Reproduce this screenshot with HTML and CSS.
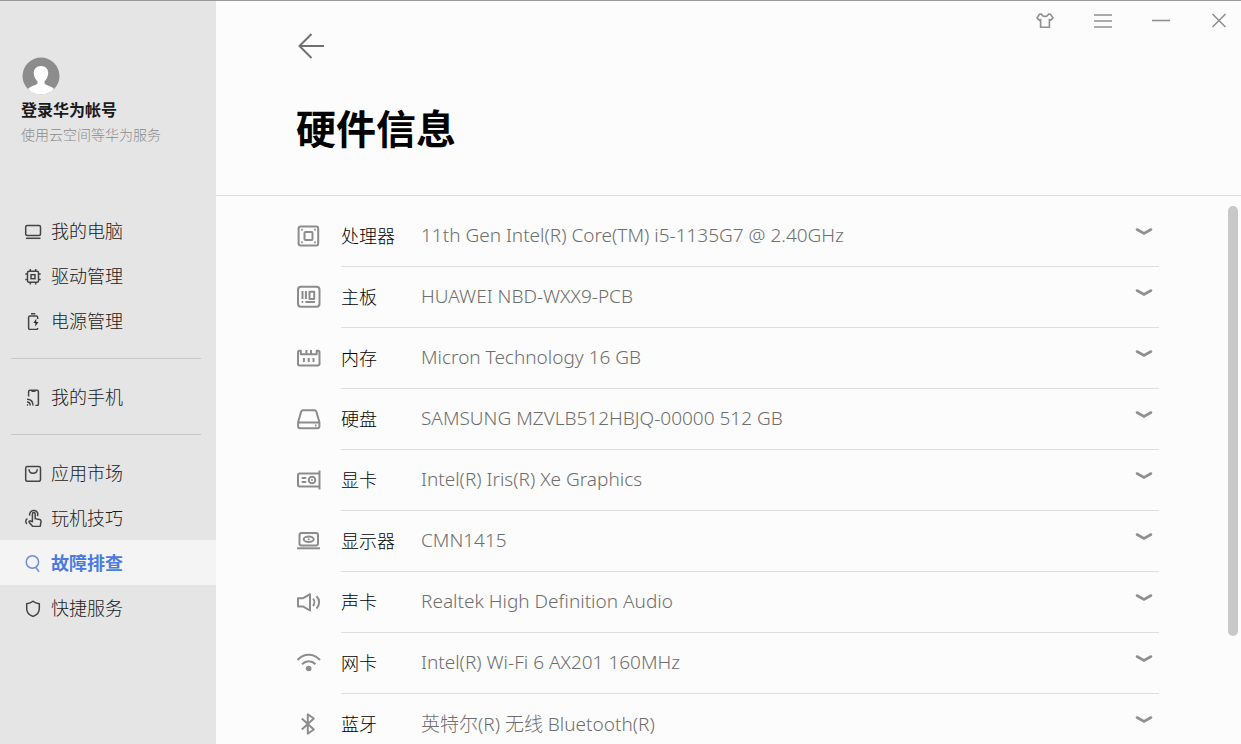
FILE: index.html
```html
<!DOCTYPE html>
<html lang="zh-CN">
<head>
    <meta charset="UTF-8">
    <meta name="viewport" content="width=device-width, initial-scale=1.0">
    <title>硬件信息</title>
    <link rel="stylesheet" href="styles.css">
</head>
<body>
    <div class="app">
        <aside class="sidebar">
            <a href="#" class="account">
                <svg class="avatar" viewBox="0 0 38 38">
                    <circle cx="19" cy="19" r="18.5" fill="#8c8c8c"/>
                    <path d="M19 9c-4.500 0-7.500 3.200-7.200 7.600.2 3.600 2 6.200 3.700 7.800v2.200c-1 1.700-7.500 2.700-9.500 5.400 3.400 3.600 8 5.500 13 5.500s9.600-1.900 13-5.500c-2-2.700-8.500-3.700-9.500-5.400v-2.200c1.700-1.600 3.500-4.200 3.700-7.800C26.500 12.200 23.500 9 19 9z" fill="#fff"/>
                </svg>
                <span class="account-name">登录华为帐号</span>
                <span class="account-text">使用云空间等华为服务</span>
            </a>
            <nav class="menu">
                <a href="#" class="menu-item">
                    <svg viewBox="0 0 19 19"><rect x="1.700" y="4.500" width="14.800" height="10" rx="1.500"/><path d="M2 17.300h14.500"/></svg>
                    我的电脑
                </a>
                <a href="#" class="menu-item">
                    <svg viewBox="0 0 19 19"><rect x="3.500" y="5.200" width="11" height="11" rx="1.500"/><rect x="7" y="8.700" width="4" height="4"/><path d="M6.300 5V3M11.700 5V3M6.300 16.400v2M11.700 16.400v2M3.300 8h-2M3.300 13.400h-2M14.700 8h2M14.700 13.400h2"/></svg>
                    驱动管理
                </a>
                <a href="#" class="menu-item">
                    <svg viewBox="0 0 19 19"><path d="M7 2.800h4.300M13.700 8V6.500c0-1-.6-1.600-1.600-1.600H6.200c-1 0-1.600.6-1.600 1.600v10.400c0 1 .6 1.600 1.600 1.600h5.900c1 0 1.600-.6 1.600-1.600"/><path d="M12.300 7.800l-3 4.300h2v3.400l3.200-4.600h-2.200z" fill="#333" stroke="none"/></svg>
                    电源管理
                </a>
                <hr class="menu-line">
                <a href="#" class="menu-item">
                    <svg viewBox="0 0 19 19"><path d="M4.600 9.500V4.700c0-.9.500-1.400 1.400-1.400h7c.9 0 1.400.5 1.400 1.400v12.400c0 .9-.5 1.400-1.400 1.400h-1.700M7.500 4.200h4M3 12.200c3.700 0 6 2.500 6 6.300M3 15c2 0 3.200 1.400 3.200 3.400"/><circle cx="3.500" cy="18" r=".8" fill="#333" stroke="none"/></svg>
                    我的手机
                </a>
                <hr class="menu-line">
                <a href="#" class="menu-item">
                    <svg viewBox="0 0 19 19"><rect x="1.700" y="3.500" width="14.800" height="14.800" rx="1.700"/><path d="M5 6.300c0 5.400 8.200 5.400 8.200 0"/></svg>
                    应用市场
                </a>
                <a href="#" class="menu-item">
                    <svg viewBox="0 0 19 19"><path d="M8.400 13.600V5.900c0-2 2.800-2 2.800 0v4.800l4.300.8c1.100.2 1.600.8 1.500 1.900l-.6 4.200c-.1.600-.5.900-1.100.9H9.500c-.6 0-1-.2-1.400-.7L5.300 14.500c-.8-1.200.6-2.200 1.600-1.300zM5.700 7.700C4.700 1.300 14 1 13.800 6.300c0 .8-.1 1.200-.4 1.800M3.500 10.700c-2 .6-2.300 3.900-.5 5.200"/></svg>
                    玩机技巧
                </a>
                <a href="#" class="menu-item active">
                    <svg viewBox="0 0 19 19"><circle cx="8.400" cy="9" r="6.200"/><path d="M11.700 14.300l3.400 4.500"/></svg>
                    故障排查
                </a>
                <a href="#" class="menu-item">
                    <svg viewBox="0 0 19 19"><path d="M9 3.200c2 1.700 4 2.300 6.300 2.600v5c0 3.800-2.600 6.300-6.300 7.600-3.700-1.300-6.300-3.800-6.300-7.600v-5C5 5.500 7 4.900 9 3.200z"/></svg>
                    快捷服务
                </a>
            </nav>
        </aside>

        <main class="main">
            <header class="header">
                <div class="header-left">
                    <button class="back" aria-label="返回">
                        <svg viewBox="0 0 28 28"><path d="M28 14H3.500M15.500 2L3.500 14l12 12"/></svg>
                    </button>
                    <h1>硬件信息</h1>
                </div>
                <div class="window-buttons">
                    <button aria-label="主题">
                        <svg viewBox="0 0 20 20"><path d="M6.500 4c1 3.200 6 3.200 7 0l2 .2 2.500 3.600-2.300 2.400-1.300-.5v7.500H5.600V9.700l-1.300.5L2 7.800l2.500-3.600z"/></svg>
                    </button>
                    <button aria-label="菜单">
                        <svg viewBox="0 0 20 20"><path d="M1 5h18M1 11h18M1 17h18"/></svg>
                    </button>
                    <button aria-label="最小化">
                        <svg viewBox="0 0 20 20"><path d="M1 10.500h18"/></svg>
                    </button>
                    <button aria-label="关闭">
                        <svg viewBox="0 0 20 20"><path d="M3.500 4l13 13M16.500 4l-13 13"/></svg>
                    </button>
                </div>
            </header>

            <div class="content">
                <ul class="hardware">
                    <li>
                        <svg class="icon" viewBox="0 0 24 24"><rect x="1.600" y="2.500" width="19.600" height="19" rx="2"/><rect x="7.500" y="8" width="8" height="8" rx="1"/><path class="dot" d="M5 5.700h0M18 5.700h0M5 18.300h0M18 18.300h0"/></svg>
                        <div class="row"><span class="name">处理器</span><span class="value">11th Gen Intel(R) Core(TM) i5-1135G7 @ 2.40GHz</span>
                            <button class="expand" aria-label="展开处理器"><svg viewBox="0 0 18 10"><path d="M2 2.500l7 4 7-4"/></svg></button></div>
                    </li>
                    <li>
                        <svg class="icon" viewBox="0 0 24 24"><rect x="1" y="1.700" width="21.500" height="20" rx="3"/><path d="M5.500 6v8M8.900 6v8M12.500 6.700h4.700V14h-4.700zM8.500 17h9.500M4.700 17h1.500"/></svg>
                        <div class="row"><span class="name">主板</span><span class="value">HUAWEI NBD-WXX9-PCB</span>
                            <button class="expand" aria-label="展开主板"><svg viewBox="0 0 18 10"><path d="M2 2.500l7 4 7-4"/></svg></button></div>
                    </li>
                    <li>
                        <svg class="icon" viewBox="0 0 24 24"><path d="M3.800 4.800H2.500C1.500 4.800 1 5.400 1 6.300v11.500c0 1 .6 1.700 1.700 1.700h18c1.100 0 1.800-.7 1.800-1.700V6.300c0-.9-.6-1.500-1.500-1.500h-1.300v3.500H3.800zM9.400 4v4M14 4v4M6.900 12v4M11.700 12v4M16.500 12v4"/></svg>
                        <div class="row"><span class="name">内存</span><span class="value">Micron Technology 16 GB</span>
                            <button class="expand" aria-label="展开内存"><svg viewBox="0 0 18 10"><path d="M2 2.500l7 4 7-4"/></svg></button></div>
                    </li>
                    <li>
                        <svg class="icon" viewBox="0 0 24 24"><path d="M6 3.300h11.500c1 0 1.600.5 1.900 1.400l3 10.500v4c0 1.200-.8 2-2 2H3.100c-1.200 0-2-.8-2-2v-4l3-10.500c.3-.9.900-1.400 1.900-1.400zM1.200 15.500h21.200M18 18.400h1.500"/></svg>
                        <div class="row"><span class="name">硬盘</span><span class="value">SAMSUNG MZVLB512HBJQ-00000 512 GB</span>
                            <button class="expand" aria-label="展开硬盘"><svg viewBox="0 0 18 10"><path d="M2 2.500l7 4 7-4"/></svg></button></div>
                    </li>
                    <li>
                        <svg class="icon" viewBox="0 0 24 24"><path d="M22.300 5.500H2.700C1.600 5.500 1 6.200 1 7.200v9.600c0 1 .6 1.700 1.700 1.700h19.600M22.500 2.500v19M4.700 10h4.600M4.700 14h4.600"/><circle cx="15" cy="12" r="3.300"/><path class="dot" d="M15 12h0"/></svg>
                        <div class="row"><span class="name">显卡</span><span class="value">Intel(R) Iris(R) Xe Graphics</span>
                            <button class="expand" aria-label="展开显卡"><svg viewBox="0 0 18 10"><path d="M2 2.500l7 4 7-4"/></svg></button></div>
                    </li>
                    <li>
                        <svg class="icon" viewBox="0 0 24 24"><rect x="2.500" y="4" width="18.500" height="12.500" rx="2"/><path d="M0 19.300h23"/><ellipse cx="11.700" cy="10.200" rx="5" ry="2.700"/><path class="dot" d="M11.700 10.200h0"/></svg>
                        <div class="row"><span class="name">显示器</span><span class="value">CMN1415</span>
                            <button class="expand" aria-label="展开显示器"><svg viewBox="0 0 18 10"><path d="M2 2.500l7 4 7-4"/></svg></button></div>
                    </li>
                    <li>
                        <svg class="icon" viewBox="0 0 24 24"><path d="M1 8.300h4.800l7.200-4.100v16.300l-7.200-4.100H1zM16 8.700c1.800 2 1.800 5.300 0 7.300M19.500 6.300c3.500 3.300 3.500 8.800 0 12.100"/></svg>
                        <div class="row"><span class="name">声卡</span><span class="value">Realtek High Definition Audio</span>
                            <button class="expand" aria-label="展开声卡"><svg viewBox="0 0 18 10"><path d="M2 2.500l7 4 7-4"/></svg></button></div>
                    </li>
                    <li>
                        <svg class="icon" viewBox="0 0 24 24"><path d="M.5 9c6.500-7 16-7 22.500 0M5 13.300c4-4 9.500-4 13.500 0"/><circle cx="11.700" cy="17.500" r="2.800" fill="#8c8c8c" stroke="none"/></svg>
                        <div class="row"><span class="name">网卡</span><span class="value">Intel(R) Wi-Fi 6 AX201 160MHz</span>
                            <button class="expand" aria-label="展开网卡"><svg viewBox="0 0 18 10"><path d="M2 2.500l7 4 7-4"/></svg></button></div>
                    </li>
                    <li>
                        <svg class="icon" viewBox="0 0 24 24"><path d="M4.800 6.500l12 11-6 4.200V2.300l6 4.200-12 11"/></svg>
                        <div class="row"><span class="name">蓝牙</span><span class="value">英特尔(R) 无线 Bluetooth(R)</span>
                            <button class="expand" aria-label="展开蓝牙"><svg viewBox="0 0 18 10"><path d="M2 2.500l7 4 7-4"/></svg></button></div>
                    </li>
                </ul>
                <div class="scrollbar"><div class="thumb"></div></div>
            </div>
        </main>
    </div>
</body>
</html>
```
FILE: styles.css
```css
* {
    box-sizing: border-box;
}
body {
    margin: 0;
    font-family: "Open Sans", "Noto Sans CJK SC", sans-serif;
    font-size: 18px;
    font-weight: 300;
    color: #1a1a1a;
}
a {
    color: inherit;
    text-decoration: none;
}
button {
    padding: 0;
    border: none;
    background: none;
    cursor: pointer;
}
svg {
    display: block;
    flex-shrink: 0;
    fill: none;
}
.app {
    display: flex;
    height: 100vh;
    border-top: 1px solid #999;
    overflow: hidden;
    background-color: #fcfcfc;
}

/* sidebar */
.sidebar {
    width: 216px;
    flex-shrink: 0;
    padding-top: 56px;
    background-color: #e5e5e5;
}
.account {
    display: flex;
    flex-direction: column;
    height: 151px;
    padding-left: 21px;
}
.avatar {
    width: 38px;
    height: 38px;
    margin-left: 1px;
}
.account-name {
    font-size: 16px;
    font-weight: bold;
    line-height: 30px;
}
.account-text {
    font-size: 14px;
    line-height: 20px;
    color: #8c8c8c;
}
.menu-item {
    display: flex;
    align-items: center;
    gap: 8px;
    height: 45px;
    padding: 0 0 2px 24px;
}
.menu-item svg {
    width: 19px;
    height: 19px;
    margin-top: 2px;
    stroke: #444;
    stroke-width: 1.5;
}
.menu-item.active {
    background-color: #f4f4f4;
    color: #4a7be0;
    font-weight: bold;
}
.menu-item.active svg {
    stroke: #6c8fdc;
}
.menu-line {
    height: 1px;
    margin: 15px 15px 15px 11px;
    border: none;
    background-color: #c8c8c8;
}

/* right part */
.main {
    flex: 1;
    display: flex;
    flex-direction: column;
    min-width: 0;
}
.header {
    display: flex;
    justify-content: space-between;
    align-items: flex-start;
    height: 195px;
    flex-shrink: 0;
    padding-left: 80px;
    border-bottom: 1px solid #dedede;
}
.header-left {
    padding-top: 31px;
}
.back svg {
    width: 28px;
    height: 28px;
    stroke: #707070;
    stroke-width: 2;
}
h1 {
    margin: 34px 0 0;
    font-size: 40px;
    line-height: 60px;
    font-weight: bold;
    color: #000;
}
.window-buttons {
    display: flex;
    gap: 38px;
    padding: 9px 12px 0 0;
}
.window-buttons svg {
    width: 20px;
    height: 20px;
    stroke: #909090;
    stroke-width: 1.6;
}
.content {
    flex: 1;
    display: flex;
    min-height: 0;
    padding: 10px 3px 0 81px;
}
.hardware {
    flex: 1;
    margin: 0;
    padding: 0;
    list-style: none;
    overflow-y: auto;
    scrollbar-width: none;
}
.hardware li {
    display: flex;
    align-items: center;
    gap: 20px;
}
.icon {
    width: 24px;
    height: 24px;
    margin-bottom: 2px;
    stroke: #8c8c8c;
    stroke-width: 2;
    stroke-linejoin: round;
}
.dot {
    stroke-width: 2;
    stroke-linecap: round;
}
.row {
    flex: 1;
    display: flex;
    align-items: center;
    height: 61px;
    padding-bottom: 2px;
    border-bottom: 1px solid #dedede;
}
.name {
    width: 80px;
    color: #000;
}
.value {
    flex: 1;
    font-family: "Noto Sans", "Noto Sans CJK SC", sans-serif;
    font-size: 19px;
    color: #6e6e6e;
}
.expand {
    padding: 0 6px 6px 0;
}
.expand svg {
    width: 18px;
    height: 10px;
    stroke: #909090;
    stroke-width: 2.6;
    stroke-linecap: round;
}
.scrollbar {
    width: 10px;
    margin-left: 69px;
}
.thumb {
    height: 80%;
    border-radius: 5px;
    background-color: #c8c8c8;
}
```
